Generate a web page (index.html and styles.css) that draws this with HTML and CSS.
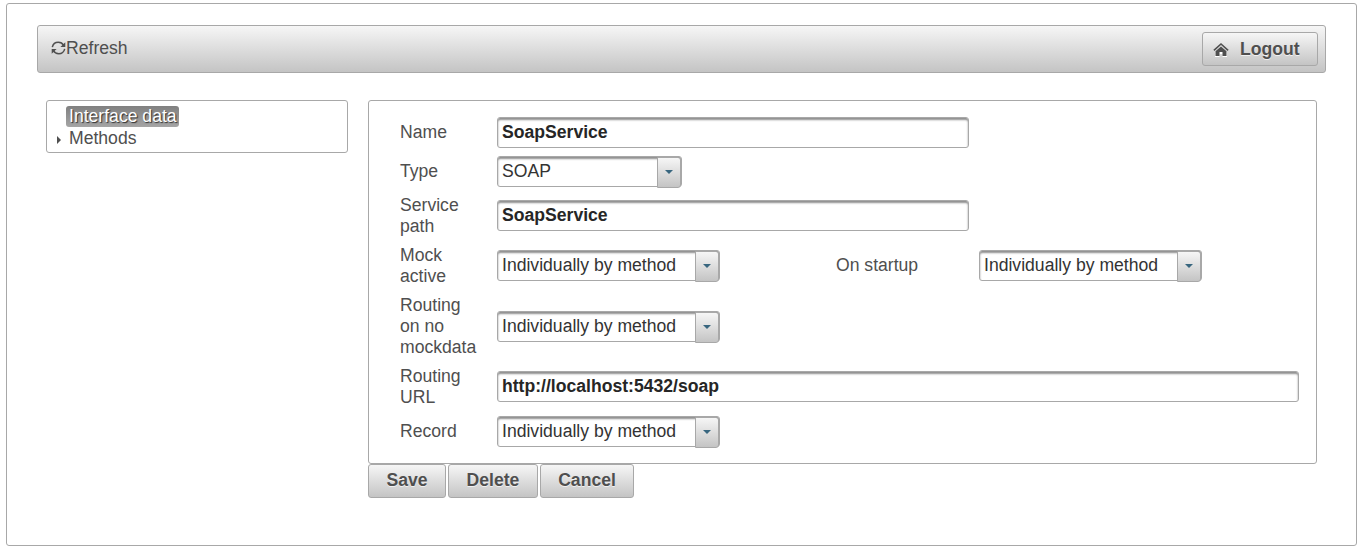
FILE: index.html
```html
<!DOCTYPE html>
<html lang="en">
<head>
<meta charset="utf-8">
<title>SoapService</title>
<link rel="stylesheet" href="styles.css">
</head>
<body>
<div class="page">
  <header class="toolbar">
    <a class="refresh"><svg width="15" height="14" viewBox="0 0 15 14" fill="none" stroke="#4f4f4f" stroke-width="1.5"><path d="M1.300 6.200C2 3.200 4.300 1.300 7.300 1.300c2.300 0 4.200 1 5.300 3M13.700 7.800c-.7 3-3 4.900-6 4.900-2.300 0-4.200-1-5.300-3"/><path d="M14.300 1.200v4.900H9.400zM.7 12.800V7.900h4.900z" fill="#4f4f4f" stroke="none"/></svg><span>Refresh</span></a>
    <button class="button logout"><svg width="16" height="16" viewBox="0 0 16 16"><path d="M8 5l6 5v5H9.500v-3h-3v3H2V10z" fill="#fff"/><path d="M.9 8.300L8 2l7.100 6.300" fill="none" stroke="#4f4f4f" stroke-width="1.600"/><path d="M8 4.400l5.500 4.900V14H9.500v-4h-3v4h-4V9.300z" fill="#4f4f4f"/></svg><span>Logout</span></button>
  </header>
  <div class="content">
    <nav class="tree">
      <div class="node"><span class="node-label selected">Interface data</span></div>
      <div class="node"><span class="arrow"></span><span class="node-label">Methods</span></div>
    </nav>
    <main class="main">
      <div class="panel">
        <label class="label">Name</label>
        <div class="field input medium">SoapService</div>
        <label class="label">Type</label>
        <div class="field select small">SOAP<span class="trigger"></span></div>
        <label class="label">Service path</label>
        <div class="field input medium raised">SoapService</div>
        <label class="label">Mock active</label>
        <div class="pair raised">
          <div class="field select">Individually by method<span class="trigger"></span></div>
          <label class="startup">On startup</label>
          <div class="field select">Individually by method<span class="trigger"></span></div>
        </div>
        <label class="label">Routing on no mockdata</label>
        <div class="field select">Individually by method<span class="trigger"></span></div>
        <label class="label">Routing URL</label>
        <div class="field input raised">http://localhost:5432/soap</div>
        <label class="label">Record</label>
        <div class="field select">Individually by method<span class="trigger"></span></div>
      </div>
      <div class="actions">
        <button class="button save">Save</button>
        <button class="button delete">Delete</button>
        <button class="button cancel">Cancel</button>
      </div>
    </main>
  </div>
</div>
</body>
</html>
```
FILE: styles.css
```css
* { box-sizing: border-box; }
body {
  margin: 0;
  padding: 3px 3px 0 6px;
  background: #fff;
  color: #4f4f4f;
  font: 17.6px/21px "Liberation Sans", Arial, sans-serif;
  overflow: hidden;
}
.page {
  height: 543px;
  padding: 21px 30px;
  border: 1px solid #a8a8a8;
  border-radius: 3px;
}
.toolbar {
  display: flex;
  justify-content: space-between;
  align-items: flex-start;
  height: 48px;
  padding: 6px 7px 6px 13px;
  border: 1px solid #a8a8a8;
  border-radius: 3px;
  background: linear-gradient(#f6f6f6, #c4c4c4);
}
.refresh { display: flex; align-items: center; height: 32px; }
.button {
  height: 34px;
  padding: 0 0 1px;
  border: 1px solid #a8a8a8;
  border-radius: 3px;
  background: linear-gradient(#f6f6f6, #c4c4c4);
  color: #4f4f4f;
  font: bold 17.6px/21px "Liberation Sans", Arial, sans-serif;
  text-shadow: 0 1px 0 rgba(255, 255, 255, .7);
}
.logout {
  display: flex;
  align-items: center;
  gap: 11px;
  width: 116px;
  padding: 1px 0 0 10px;
}
.content {
  display: flex;
  align-items: flex-start;
  gap: 20px;
  padding: 27px 9px 0;
}
.tree {
  width: 302px;
  height: 53px;
  padding: 4px 0 0 9px;
  border: 1px solid #a8a8a8;
  border-radius: 3px;
}
.node { display: flex; align-items: center; height: 22px; padding-left: 10px; }
.node-label { height: 21px; padding: 0 3px; line-height: 20px; border-radius: 3px; }
.selected {
  padding-right: 2px;
  background: linear-gradient(#808080, #a5a5a5);
  color: #fff;
  text-shadow: 1px 1px 1px rgba(0, 0, 0, .7);
}
.arrow {
  width: 4px;
  height: 8px;
  margin: 3px 5px 0 -9px;
  border: solid transparent;
  border-width: 4px 0 4px 4px;
  border-left-color: #4f4f4f;
}
.main { flex: 1; }
.panel {
  display: grid;
  grid-template-columns: 81px 1fr;
  grid-template-rows: 31px 31px 42px 42px 63px 42px 31px;
  column-gap: 16px;
  row-gap: 8px;
  align-items: center;
  height: 364px;
  padding: 16px 17px 0 31px;
  border: 1px solid #a8a8a8;
  border-radius: 3px;
}
.field {
  height: 31px;
  padding: 0 4px;
  border: 1px solid #a8a8a8;
  border-radius: 3px;
  box-shadow: inset 0 2px 2px #8f8f8f;
  color: #262626;
  line-height: 28px;
  white-space: nowrap;
}
.input { font-weight: bold; }
.medium { width: 472px; }
.select {
  display: flex;
  justify-content: space-between;
  width: 223px;
  padding-right: 0;
  color: #333;
}
.small { width: 185px; }
.raised { margin-bottom: 1px; }
.trigger {
  display: flex;
  align-items: center;
  justify-content: center;
  width: 24px;
  height: 31px;
  padding-bottom: 2px;
  border: 1px solid #a8a8a8;
  border-radius: 0 3px 3px 0;
  background: linear-gradient(#f6f6f6, #c4c4c4);
}
.trigger::before {
  content: "";
  border: solid transparent;
  border-width: 4px 4px 0;
  border-top-color: #38667f;
}
.pair { display: flex; align-items: center; }
.startup { width: 143px; margin-left: 116px; padding-bottom: 1px; }
.actions { display: flex; gap: 2px; }
.save { width: 78px; }
.delete { width: 90px; }
.cancel { width: 94px; }
```
